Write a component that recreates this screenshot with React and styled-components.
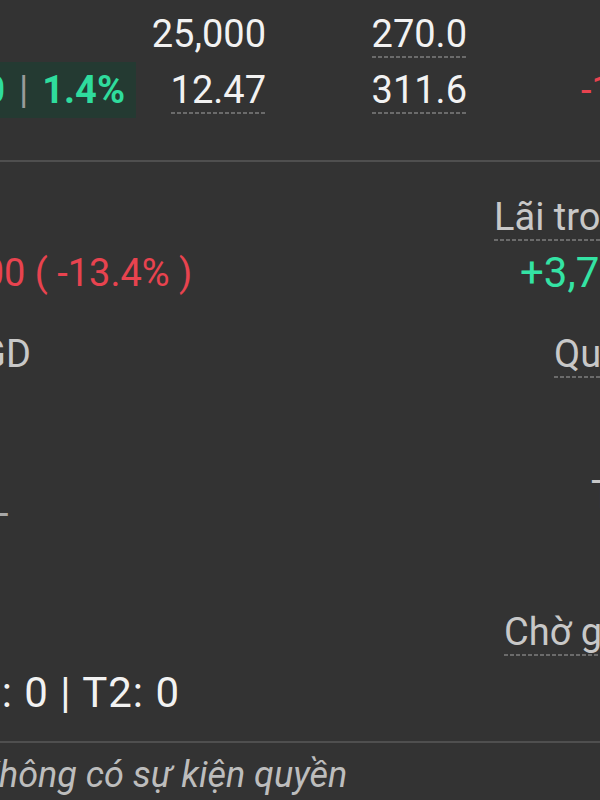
import React from "react";
import styled, { createGlobalStyle } from "styled-components";

const GlobalStyle = createGlobalStyle`
  html, body {
    margin: 0;
    padding: 0;
    background: #333333;
  }
  body {
    font-family: Roboto, "Noto Sans", sans-serif;
  }
`;

const tones = {
  white: "#f2f2f2",
  grey: "#c8c8c8",
  dim: "#a8a8a8",
  red: "#e8434f",
  green: "#34e3a4",
};

const Screen = styled.div`
  width: 600px;
  height: 800px;
  overflow: hidden;
  background: #333333;
  color: ${tones.white};
  font-size: 38px;
  line-height: 44px;
`;

const Table = styled.div`
  width: 800px;
  margin-left: -100px;
  padding-top: 6px;
`;

const TableRow = styled.div`
  display: grid;
  grid-template-columns: 236px 130px 201px 1fr;
  height: 56px;
`;

const Cell = styled.div`
  padding-top: 6px;
  padding-left: ${({ $pad }) => $pad || 0}px;
  text-align: ${({ $align }) => $align || "right"};
  color: ${({ $tone }) => tones[$tone || "white"]};
  white-space: nowrap;
`;

const Badge = styled(Cell)`
  background: #243a32;
  padding-right: 11px;
  font-weight: 700;
  color: #2fdc9d;
`;

const Sep = styled.span`
  margin: 0 14px;
  font-weight: 400;
  color: #9a9a9a;
`;

const Dotted = styled.span`
  display: inline-block;
  padding-bottom: 2px;
  background: repeating-linear-gradient(
      to right,
      #6b6b6b 0 4px,
      transparent 4px 6px
    )
    left bottom / 100% 2px no-repeat;
`;

const Divider = styled.div`
  height: 2px;
  background: #4f4f4f;
  margin-top: ${({ $gap }) => $gap}px;
`;

const Line = styled.div`
  display: grid;
  grid-template-columns: 494px 1fr;
  height: 44px;
  margin-top: ${({ $gap }) => $gap}px;
`;

const Left = styled.div`
  margin-left: ${({ $shift }) => $shift || 0}px;
  padding-top: ${({ $drop }) => $drop || 0}px;
  font-size: ${({ $size }) => $size || 38}px;
  letter-spacing: ${({ $track }) => $track || 0}px;
  color: ${({ $tone }) => tones[$tone || "white"]};
  white-space: nowrap;
`;

const Right = styled.div`
  grid-column: 2;
  padding-left: ${({ $pad }) => $pad || 0}px;
  font-size: ${({ $size }) => $size || 38}px;
  color: ${({ $tone }) => tones[$tone || "grey"]};
  white-space: nowrap;
`;

const Note = styled.div`
  margin-top: 10px;
  margin-left: -23px;
  font-size: 36px;
  font-style: italic;
  color: #bdbdbd;
  white-space: nowrap;
`;

export default function App() {
  return (
    <Screen>
      <GlobalStyle />
      <Table>
        <TableRow>
          <Cell />
          <Cell>25,000</Cell>
          <Cell>
            <Dotted>270.0</Dotted>
          </Cell>
          <Cell />
        </TableRow>
        <TableRow>
          <Badge>
            +350<Sep>|</Sep>1.4%
          </Badge>
          <Cell>
            <Dotted>12.47</Dotted>
          </Cell>
          <Cell>
            <Dotted>311.6</Dotted>
          </Cell>
          <Cell $align="left" $pad={114} $tone="red">
            -1.2%
          </Cell>
        </TableRow>
      </Table>

      <Divider $gap={42} />

      <Line $gap={33}>
        <Right>
          <Dotted>Lãi trong ngày</Dotted>
        </Right>
      </Line>
      <Line $gap={12}>
        <Left $shift={-78} $tone="red">
          -3,900 ( -13.4% )
        </Left>
        <Right $pad={26} $size={42} $tone="green">
          +3,750,000
        </Right>
      </Line>
      <Line $gap={37}>
        <Left $shift={-20} $tone="grey">
          GD
        </Left>
        <Right $pad={60}>
          <Dotted>Quyền</Dotted>
        </Right>
      </Line>
      <Line $gap={97}>
        <Left $shift={-2} $drop={18} $tone="dim">
          -
        </Left>
        <Right $pad={97}>T</Right>
      </Line>
      <Line $gap={93}>
        <Right $pad={10}>
          <Dotted>Chờ giao dịch</Dotted>
        </Right>
      </Line>
      <Line $gap={17}>
        <Left $shift={-49} $size={42} $track={1}>
          T1: 0 | T2: 0
        </Left>
      </Line>

      <Divider $gap={26} />

      <Note>Không có sự kiện quyền</Note>
    </Screen>
  );
}
